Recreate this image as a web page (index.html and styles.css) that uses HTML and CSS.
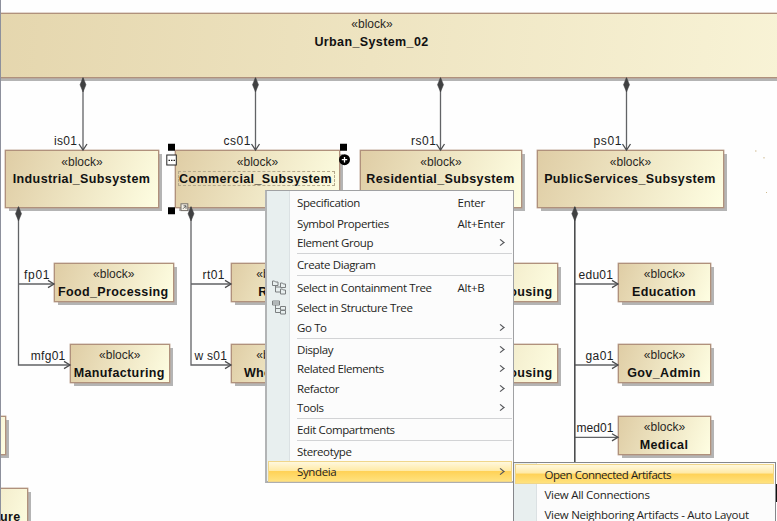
FILE: index.html
```html
<!DOCTYPE html>
<html lang="en">
<head>
<meta charset="utf-8">
<title>Urban System block diagram</title>
<link rel="stylesheet" href="styles.css">
</head>
<body>
<main class="canvas">
  <section class="node n-urban"><span class="stereo">«block»</span><span class="name">Urban_System_02</span></section>
  <section class="node big n-ind"><span class="stereo">«block»</span><span class="name">Industrial_Subsystem</span></section>
  <section class="node big n-com"><span class="stereo">«block»</span><span class="name editing">Commercial_Subsystem</span></section>
  <section class="node big n-res"><span class="stereo">«block»</span><span class="name">Residential_Subsystem</span></section>
  <section class="node big n-pub"><span class="stereo">«block»</span><span class="name">PublicServices_Subsystem</span></section>
  <section class="node n-food"><span class="stereo">«block»</span><span class="name">Food_Processing</span></section>
  <section class="node n-man"><span class="stereo">«block»</span><span class="name">Manufacturing</span></section>
  <section class="node n-ret"><span class="stereo">«block»</span><span class="name">Retail</span></section>
  <section class="node n-who"><span class="stereo">«block»</span><span class="name">Wholesale</span></section>
  <section class="node n-h1"><span class="stereo">«block»</span><span class="name">Housing</span></section>
  <section class="node n-h2"><span class="stereo">«block»</span><span class="name">Housing</span></section>
  <section class="node n-edu"><span class="stereo">«block»</span><span class="name">Education</span></section>
  <section class="node n-gov"><span class="stereo">«block»</span><span class="name">Gov_Admin</span></section>
  <section class="node n-med"><span class="stereo">«block»</span><span class="name">Medical</span></section>
  <section class="node n-cut"></section>
  <section class="node n-ure"><span class="stereo">&nbsp;</span><span class="name">ure</span></section>

  <svg class="edges" width="777" height="521" viewBox="0 0 777 521">
    <defs>
      <path id="dia" d="M0 0L3 7.2L0 14.5L-3 7.2Z" fill="#404142" stroke="#404142" stroke-width=".5"/>
      <path id="down" d="M-4 -6L0 0L4 -6" fill="none" stroke="#4c4d4f" stroke-width="1.3"/>
      <path id="right" d="M-6 -3.6L0 0L-6 3.6" fill="none" stroke="#4c4d4f" stroke-width="1.3"/>
    </defs>
    <g class="wire">
      <path d="M83 78V150M255.5 78V150M440.5 78V150M626.5 78V150"/>
      <path d="M18.5 207V365H70M18.5 284H54M191 207V365H231M191 284H231"/>
      <path d="M575 284H618M575 365H618M575 437.3H618"/>
      <path class="trunk" d="M574.8 207V470"/>
    </g>
    <use href="#dia" x="83" y="77.5"/><use href="#dia" x="255.5" y="77.5"/><use href="#dia" x="440.5" y="77.5"/><use href="#dia" x="626.5" y="77.5"/>
    <use href="#dia" x="18.5" y="206.5"/><use href="#dia" x="191" y="206.5"/><use href="#dia" x="574.8" y="206.5"/>
    <use href="#down" x="83" y="150"/><use href="#down" x="255.5" y="150"/><use href="#down" x="440.5" y="150"/><use href="#down" x="626.5" y="150"/>
    <use href="#right" x="54" y="284"/><use href="#right" x="70" y="365"/><use href="#right" x="231" y="284"/><use href="#right" x="231" y="365"/>
    <use href="#right" x="618" y="284"/><use href="#right" x="618" y="365"/><use href="#right" x="618" y="437.3"/>
    <g class="role">
      <text x="54" y="145" textLength="23">is01</text>
      <text x="223.5" y="145" textLength="27">cs01</text>
      <text x="411" y="145" textLength="25">rs01</text>
      <text x="593.5" y="145" textLength="28">ps01</text>
      <text x="24" y="278.5" textLength="25.5">fp01</text>
      <text x="30.8" y="359.7" textLength="34.5">mfg01</text>
      <text x="202.5" y="278.5" textLength="22">rt01</text>
      <text x="194.5" y="359.7" textLength="32.5">w s01</text>
      <text x="578.5" y="278.5" textLength="34.5">edu01</text>
      <text x="585.5" y="359.7" textLength="28">ga01</text>
      <text x="576.5" y="432.3" textLength="37">med01</text>
    </g>
    <!-- selection handles and smart manipulators -->
    <path d="M168 143.700h7v7h-7zM340 143.700h7v7h-7zM168 207.200h7v7h-7z" fill="#000"/>
    <rect x="166.800" y="155" width="9.500" height="10" fill="#fff" stroke="#222"/>
    <path d="M168.500 160.300h1.500m1 0h1.500m1 0h1.500" stroke="#222" stroke-width="1.300"/>
    <circle cx="344.500" cy="159.700" r="5.500" fill="#000"/>
    <path d="M341.800 159.700h5.400M344.500 157v5.400" stroke="#fff" stroke-width="1.300"/>
    <rect x="181" y="203.800" width="6.800" height="6.800" fill="#f5f1e6" stroke="#75706a"/>
    <path d="M183 208.800l3-3M183.500 205.800h2.500v3" fill="none" stroke="#555" stroke-width=".9"/>
    <path d="M755 151h1.500M764 157v1.500M766 192.500h1" stroke="#cdb98e" stroke-width="1"/>
  </svg>

  <nav class="menu main">
    <div class="item t"><span>Specification</span><kbd>Enter</kbd></div>
    <div class="item t"><span>Symbol Properties</span><kbd>Alt+Enter</kbd></div>
    <div class="item"><span>Element Group</span><i class="more"></i></div>
    <hr>
    <div class="item"><span>Create Diagram</span></div>
    <hr>
    <div class="item t">
      <svg class="icon" width="15" height="15" viewBox="0 0 15 15"><path d="M.5 1h2l1 1h2.500v3.500H.5zM8.500 3h2l.8 1h2.200v3.500h-5zM8.500 9h2l.8 1h2.200v4h-5zM3.500 5.500v6.500h5M3.500 7h5"/></svg>
      <span>Select in Containment Tree</span><kbd>Alt+B</kbd></div>
    <div class="item t">
      <svg class="icon" width="15" height="15" viewBox="0 0 15 15"><path d="M.5 1h7v4h-7zM.5 3h7M8.500 6.500h5v3.500h-5zM8.500 10.500h5v3.500h-5zM3.500 5v7.500h5M3.500 8.500h5"/></svg>
      <span>Select in Structure Tree</span></div>
    <div class="item"><span>Go To</span><i class="more"></i></div>
    <hr>
    <div class="item"><span>Display</span><i class="more"></i></div>
    <div class="item"><span>Related Elements</span><i class="more"></i></div>
    <div class="item"><span>Refactor</span><i class="more"></i></div>
    <div class="item"><span>Tools</span><i class="more"></i></div>
    <hr>
    <div class="item"><span>Edit Compartments</span></div>
    <hr>
    <div class="item"><span>Stereotype</span></div>
    <div class="item hot"><span>Syndeia</span><i class="more"></i></div>
  </nav>

  <nav class="menu sub">
    <div class="item hot"><span>Open Connected Artifacts</span></div>
    <div class="item t"><span>View All Connections</span></div>
    <div class="item t"><span>View Neighboring Artifacts - Auto Layout</span></div>
  </nav>
  <div class="mark"></div>
</main>
</body>
</html>
```
FILE: styles.css
```css
* { box-sizing: border-box; }
body { margin: 0; background: #fefefe; }
.canvas {
  position: relative;
  isolation: isolate;
  width: 777px;
  height: 521px;
  overflow: hidden;
  font-family: "Liberation Sans", Arial, sans-serif;
  color: #111;
}
.canvas::before {
  content: "";
  position: absolute;
  z-index: 2;
  inset: 0 auto 0 0;
  width: 1px;
  background: #8d909c;
}

/* Blocks on the diagram canvas */
.node {
  position: absolute;
  display: flex;
  flex-direction: column;
  align-items: center;
  padding-top: 2px;
  height: 39px;
  border: 1px solid #b0917c;
  background: linear-gradient(111deg, #dfcda5, #fefee2);
  box-shadow: 0 0 0 .4px #b89c89;
}
.node::before {
  content: "";
  position: absolute;
  z-index: -1;
  inset: 3px -4px -4px 3px;
  background: #b4b4b4;
}
.stereo { font-size: 12px; line-height: 17px; color: #2b2925; }
.name {
  font-size: 12.5px;
  line-height: 19px;
  font-weight: bold;
  letter-spacing: .38px;
  white-space: nowrap;
  margin-left: -1px;
}
.big { height: 57.5px; padding-top: 3px; top: 150px; }
.big .name { line-height: 17px; }
.n-urban { left: -40px; top: 12.5px; width: 824px; height: 65.5px; background: linear-gradient(95deg, #e4d5ac, #f8f3d6); }
.n-ind { left: 5px; width: 154px; }
.n-com { left: 175px; width: 165px; }
.n-res { left: 360px; width: 162px; }
.n-pub { left: 537px; width: 187px; }
.n-food { left: 54px; top: 263px; width: 119.5px; }
.n-man { left: 70px; top: 344px; width: 99.5px; }
.n-ret { left: 231px; top: 263px; width: 92px; }
.n-who { left: 231px; top: 344px; width: 92px; }
.n-h1, .n-h2 { left: 400px; width: 158px; }
.n-h1 { top: 263px; }
.n-h2 { top: 344px; }
.n-h1 .name, .n-h2 .name { align-self: flex-end; margin-right: 4.5px; }
.n-edu { left: 618px; top: 263px; width: 93px; }
.n-gov { left: 618px; top: 344px; width: 93px; }
.n-med { left: 618px; top: 416px; width: 93px; }
.n-cut { left: -90px; top: 416px; width: 96px; }
.n-ure { left: -90px; top: 488px; width: 117.5px; height: 57px; align-items: flex-end; padding-right: 6px; padding-top: 3px; }
.n-ure .name { line-height: 17px; }
.n-com .editing { position: relative; margin-left: -4px; }
.editing::after {
  content: "";
  position: absolute;
  inset: 0 -3px 2px -1px;
  border: 1px dashed #b5a98c;
}

.edges { position: absolute; inset: 0; }
.wire path { fill: none; stroke: #626366; stroke-width: 1.3; }
.wire .trunk { stroke-width: 1.6; stroke: #4c4d4f; }
.role { font-size: 12px; fill: #222; }

/* Context menus */
.menu {
  position: absolute;
  border: 1px solid #a0a1a3;
  background: linear-gradient(90deg, #e8efef 22px, #dbe1e3 22px, #dbe1e3 23px, #fcfcfc 23px);
  font-family: "Open Sans", "Noto Sans", sans-serif;
  font-size: 11.5px;
  letter-spacing: -.38px;
  color: #1f1f23;
}
.main { left: 265px; top: 190px; width: 249px; height: 293px; border-left: 2px solid #b2b4b5; border-bottom: 2px solid #adaeb0; padding: 1.8px 1px 0; }
.sub { left: 513px; top: 462px; width: 263px; height: 80px; padding: 1px; border-color: #85868a; letter-spacing: -.29px; }
.item {
  position: relative;
  display: flex;
  align-items: center;
  height: 19.42px;
  padding-left: 29px;
  white-space: nowrap;
}
.item.t { height: 20.2px; }
.item kbd {
  position: absolute;
  left: 189.5px;
  font: inherit;
  letter-spacing: -.25px;
}
.more {
  margin-left: auto;
  margin-right: 9.5px;
  width: 5px;
  height: 5px;
  border: solid #55565a;
  border-width: 1.3px 1.3px 0 0;
  transform: scaleX(1.2) rotate(45deg);
}
.icon { position: absolute; left: 4px; fill: none; stroke: #7b7f80; }
.menu hr {
  height: 1px;
  margin: .8px 0 .8px 29px;
  border: 0;
  background: #d2d3d5;
}
.item.hot {
  background: linear-gradient(#fff8de, #ffeaa6 45%, #ffd257 50%, #ffe27e);
  border: 1px solid #f0d68a;
  padding-left: 28px;
}
.main .hot { height: 20.6px; }
.main .hot .more { margin-right: 8.5px; }
.sub .item { padding-left: 29.5px; }
.sub .item.hot { height: 20px; padding-left: 28.5px; letter-spacing: -.46px; }
.mark { position: absolute; left: 776px; top: 484px; width: 1px; height: 18px; background: #111; }
```
